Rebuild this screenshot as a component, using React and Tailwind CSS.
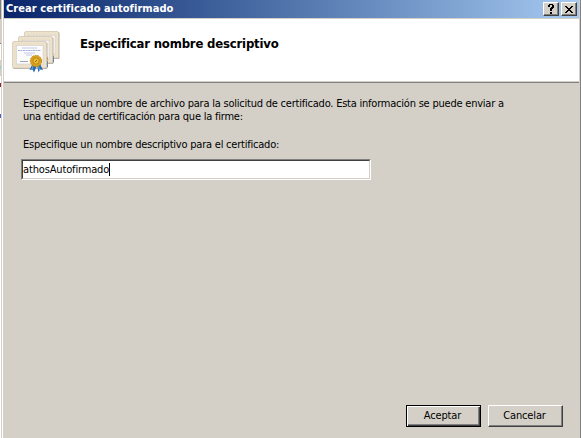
function Certificate({ x, y }) {
  return (
    <g transform={`translate(${x} ${y})`}>
      <rect x="1" y="1" width="34.5" height="27" rx="1.5" fill="#b5aea2" />
      <rect x=".5" y=".5" width="34" height="26.5" rx="1.5" fill="#eadfc9" stroke="#d3c8b3" strokeWidth=".8" />
      <rect x="1.8" y="1.8" width="31.4" height="23.8" fill="none" stroke="#f4ecdb" strokeDasharray="1 2" />
      <rect x="4.5" y="4.5" width="26.5" height="18.5" fill="#fcfcff" stroke="#d6d2cc" strokeWidth=".7" />
    </g>
  );
}

function CertificatesIcon() {
  return (
    <svg className="block h-[44px] w-[50px] shrink-0" viewBox="0 0 50 44" aria-hidden="true">
      <Certificate x={12} y={1} />
      <path d="M39.5 27l2.5-1v6l-2.5 2z" fill="#24569f" />
      <path d="M39.5 21c2 1 2 4 0 6z" fill="#c28c18" />
      <Certificate x={6} y={6} />
      <path d="M34 32l2-1v6l-2 1z" fill="#24569f" />
      <path d="M34.5 26c2 1 2 4 0 6z" fill="#c28c18" />
      <Certificate x={0} y={11} />
      <path d="M10 18h15M12 23h11M14 25h6" stroke="#b2bcdd" strokeWidth=".8" />
      <path d="M6 20.5h23" stroke="#8d9bd0" strokeWidth=".8" strokeDasharray="2 .5" />
      <path d="M8 31.5h8" stroke="#858ca2" strokeWidth=".8" />
      <path d="M20 35l-2.5 5 3-.5 1.5 3 3-7zM25 35l1.5 7.5 1.5-3 3 .5-3-6z" fill="#2467b4" />
      <path d="M21 36l-1 3M26.5 36l1 4" stroke="#6eaae2" />
      <circle cx="24" cy="31" r="5.6" fill="#dba21d" stroke="#bd850f" strokeDasharray="2 .7" />
      <circle cx="24" cy="31" r="3.2" fill="#ebba38" stroke="#a9780c" strokeWidth=".7" />
      <path d="M23 32l2-2" stroke="#8d6611" />
    </svg>
  );
}

function CaptionButton({ children, label }) {
  return (
    <button aria-label={label} className="flex h-[14px] w-[16px] items-center justify-center border border-b-[#404040] border-l-white border-r-[#404040] border-t-white bg-[#d4d0c8] shadow-[inset_-1px_-1px_0_#808080]">
      {children}
    </button>
  );
}

export default function App() {
  return (
    <main className="flex h-[438px] w-[581px] overflow-hidden bg-[#d4d0c8] font-['DejaVu_Sans_Condensed','DejaVu_Sans',sans-serif] text-[11px] text-black [font-stretch:condensed]">
      <div className="flex w-[4px] shrink-0">
        <div className="flex w-px flex-col">
          <div className="h-[19px] bg-[#808080]" />
          <div className="h-[24px] bg-[#d4d0c8]" />
          <div className="h-px bg-[#808080]" />
          <div className="h-[16px] bg-white" />
          <div className="h-[6px] bg-[#d4d0c8]" />
          <div className="h-[3px] bg-[#8fd3cc]" />
          <div className="h-[7px] bg-[#d4d0c8]" />
          <div className="h-[7px] bg-white" />
          <div className="h-[4px] bg-[#8b282e]" />
          <div className="h-[27px] bg-white" />
          <div className="h-[4px] bg-[#4b5dcc]" />
          <div className="flex-1 bg-white" />
        </div>
        <div className="w-px bg-[#d4d0c8]" />
        <div className="w-px bg-white" />
        <div className="w-px bg-[#d4d0c8]" />
      </div>
      <section className="flex min-w-0 flex-1 flex-col">
        <header className="flex h-[18px] shrink-0 items-center bg-gradient-to-r from-[#0a246a] to-[#a6caf0] pl-[2px] pr-[2px]">
          <h1 className="flex-1 whitespace-nowrap text-[11px] font-bold leading-[18px] tracking-[0.06px] text-white">Crear certificado autofirmado</h1>
          <div className="flex gap-[2px]">
            <CaptionButton label="Ayuda">
              <svg width="8" height="10" viewBox="0 0 8 10" shapeRendering="crispEdges"><path d="M1 1h1V0h4v1h1v3H6v1H5v2H3V4h1V3h1V1H3v2H1zM3 8h2v2H3z" /></svg>
            </CaptionButton>
            <CaptionButton label="Cerrar">
              <svg width="8" height="7" viewBox="0 0 8 7" shapeRendering="crispEdges"><path d="M0 0h2v1h1v1h2V1h1V0h2v1H7v1H6v1H5v1h1v1h1v1h1v1H6V6H5V5H3v1H2v1H0V6h1V5h1V4h1V3H2V2H1V1H0z" /></svg>
            </CaptionButton>
          </div>
        </header>
        <div className="flex min-h-0 flex-1 flex-col">
          <div className="flex h-[65px] shrink-0 border-t border-t-[#d4d0c8] bg-white pl-[8px] pt-[11px] shadow-[inset_0_-1px_0_#808080,inset_0_-2px_0_#d4d0c8]">
            <CertificatesIcon />
            <h2 className="ml-[18px] mt-[5px] whitespace-nowrap text-[13px] font-bold leading-[18px] tracking-[-0.19px]">Especificar nombre descriptivo</h2>
          </div>
          <form className="flex flex-1 flex-col pl-[19px] tracking-[-0.22px]">
            <p className="mt-[14px] leading-[13px]"><span className="block whitespace-nowrap">Especifique un nombre de archivo para la solicitud de certificado. Esta información se puede enviar a</span><span className="block whitespace-nowrap">una entidad de certificación para que la firme:</span></p>
            <label className="mt-[15px] whitespace-nowrap leading-[13px]">Especifique un nombre descriptivo para el certificado:</label>
            <div className="-ml-[2px] mt-[8px] h-[21px] w-[350px] border border-b-white border-l-[#808080] border-r-white border-t-[#808080]">
              <div className="flex h-full items-center border border-b-[#d4d0c8] border-l-[#404040] border-r-[#d4d0c8] border-t-[#404040] bg-white">
                <span className="leading-[17px] tracking-[-0.15px]">athosAutofirmado</span><span className="h-[13px] w-px bg-black" />
              </div>
            </div>
            <div className="mb-[11px] mt-auto flex justify-end gap-[7px] pr-[16px] tracking-[-0.15px]">
              <button className="h-[22px] w-[75px] border border-black pr-[2px] shadow-[inset_1px_1px_0_white,inset_-1px_-1px_0_#404040,inset_-2px_-2px_0_#808080]">Aceptar</button>
              <button className="h-[22px] w-[75px] border border-b-[#404040] border-l-white border-r-[#404040] border-t-white pr-[2px] shadow-[inset_-1px_-1px_0_#808080]">Cancelar</button>
            </div>
          </form>
        </div>
      </section>
      <div className="w-[2px] shrink-0 border-r border-r-[#808080] bg-[#d4d0c8]" />
    </main>
  );
}
